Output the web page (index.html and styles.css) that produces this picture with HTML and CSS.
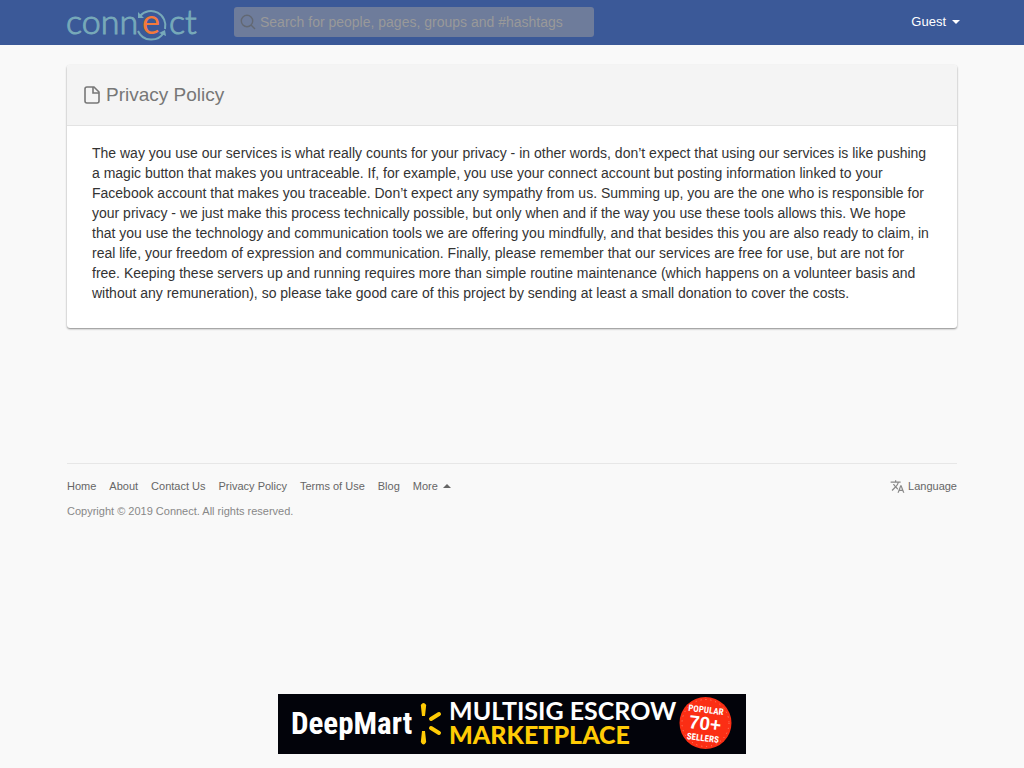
FILE: index.html
```html
<!DOCTYPE html>
<html lang="en">
<head>
<meta charset="utf-8">
<meta name="viewport" content="width=device-width, initial-scale=1">
<title>Privacy Policy - Connect</title>
<link rel="stylesheet" href="styles.css">
</head>
<body>
<header class="topbar">
  <div class="container topbar-inner">
    <a class="logo" href="#" aria-label="connect">
      <svg width="134" height="45" viewBox="0 0 134 45">
        <g class="logo-text">
          <text x="-1" y="34">conn</text>
          <text x="102" y="34">ct</text>
          <text class="logo-e" x="75" y="34">e</text>
        </g>
        <g class="logo-ring">
          <path d="M73 16A14.500 14.500 0 0 1 98 29"/>
          <path d="M71 31A14.500 14.500 0 0 0 97 32"/>
          <path class="logo-arrow" d="M71 12v6h6zM92 33l6-3 1 6z"/>
        </g>
      </svg>
    </a>
    <form class="search" role="search">
      <svg class="search-icon" width="16" height="16" viewBox="0 0 16 16"><circle cx="7" cy="7" r="5.7"/><path d="M11 11l4 4"/></svg>
      <input class="search-input" type="text" aria-label="Search" placeholder="Search for people, pages, groups and #hashtags">
    </form>
    <button class="guest" type="button">Guest <span class="caret"></span></button>
  </div>
</header>
<main class="container">
  <article class="card">
    <h1 class="card-title">
      <svg class="file-icon" width="16" height="18" viewBox="0 0 16 18"><path d="M3 1h7l5 5v9a2 2 0 0 1-2 2H3a2 2 0 0 1-2-2V3a2 2 0 0 1 2-2z"/><path d="M9 1v6h6"/></svg>
      Privacy Policy
    </h1>
    <p class="card-body">The way you use our services is what really counts for your privacy - in other words, don’t expect that using our services is like pushing a magic button that makes you untraceable. If, for example, you use your connect account but posting information linked to your Facebook account that makes you traceable. Don’t expect any sympathy from us. Summing up, you are the one who is responsible for your privacy - we just make this process technically possible, but only when and if the way you use these tools allows this. We hope that you use the technology and communication tools we are offering you mindfully, and that besides this you are also ready to claim, in real life, your freedom of expression and communication. Finally, please remember that our services are free for use, but are not for free. Keeping these servers up and running requires more than simple routine maintenance (which happens on a volunteer basis and without any remuneration), so please take good care of this project by sending at least a small donation to cover the costs.</p>
  </article>
</main>
<footer class="container">
  <div class="footer">
    <div class="footer-row">
      <nav class="footer-links">
        <a href="#">Home</a>
        <a href="#">About</a>
        <a href="#">Contact Us</a>
        <a href="#">Privacy Policy</a>
        <a href="#">Terms of Use</a>
        <a href="#">Blog</a>
        <button class="more" type="button">More <span class="caret caret-up"></span></button>
      </nav>
      <a class="language" href="#">
        <svg width="15" height="15" viewBox="0 0 24 24"><path d="M12.870 15.070l-2.540-2.510.030-.030A17.520 17.520 0 0 0 14.070 6H17V4h-7V2H8v2H1v2h11.170C11.500 7.920 10.440 9.750 9 11.350 8.070 10.320 7.300 9.190 6.690 8h-2c.730 1.630 1.730 3.170 2.980 4.560l-5.090 5.020L4 19l5-5 3.110 3.110.760-2.040zM18.500 10h-2L12 22h2l1.120-3h4.750L21 22h2l-4.500-12zm-2.620 7l1.620-4.330L19.120 17h-3.240z"/></svg>
        Language
      </a>
    </div>
    <p class="copyright">Copyright © 2019 Connect. All rights reserved.</p>
  </div>
</footer>
<a class="banner" href="#" aria-label="DeepMart multisig escrow marketplace">
  <svg width="468" height="60" viewBox="0 0 468 60">
    <rect width="468" height="60" fill="#02030a"/>
    <text class="deepmart" x="13" y="40">DeepMart</text>
    <path d="M142.800 11Q145.500 7 148.200 11L147 22h-3zM142.800 48Q145.500 53 148.200 48L147 37h-3z" fill="#ffcb05"/>
    <path d="M153 25l8-5M153 34l8 5" fill="none" stroke="#ffcb05" stroke-width="4" stroke-linecap="round"/>
    <text class="slogan" x="171" y="26" fill="#fff">MULTISIG ESCROW</text>
    <text class="slogan slogan-heavy" x="171" y="50" fill="#ffcb05">MARKETPLACE</text>
    <circle cx="427.500" cy="29" r="26" fill="#fb2e14"/>
    <circle cx="427.500" cy="29" r="23.500" fill="none" stroke="#ff8a70" stroke-width="1" stroke-dasharray="1 4"/>
    <g fill="#fff" text-anchor="middle">
      <text class="badge-small" x="428" y="19" transform="rotate(7 428 16)">POPULAR</text>
      <text class="badge-large" x="427" y="36" transform="rotate(7 427 30)">70+</text>
      <text class="badge-small" x="425" y="47" transform="rotate(7 425 43)">SELLERS</text>
    </g>
  </svg>
</a>
</body>
</html>
```
FILE: styles.css
```css
* { box-sizing: border-box; }
body {
  margin: 0;
  min-height: 100vh;
  display: flex;
  flex-direction: column;
  background: #f9f9f9;
  color: #333;
  font: 14px/20px "Liberation Sans", Arial, sans-serif;
}
a { color: inherit; text-decoration: none; }
button { padding: 0; border: 0; background: none; color: inherit; font: inherit; cursor: pointer; }
.container { width: 100%; max-width: 920px; margin: 0 auto; padding: 0 15px; }
.topbar { background: #3b5998; }
.topbar-inner { display: flex; align-items: center; height: 45px; }
.logo { display: flex; width: 167px; }
.logo svg { overflow: visible; }
.logo-text { font: 300 34px Lato, sans-serif; fill: #77a9b9; stroke: #77a9b9; stroke-width: 1; }
.logo-e { font-weight: 400; fill: #f4793b; stroke: #f4793b; stroke-width: 0; }
.logo-ring { fill: none; stroke: #77a9b9; stroke-width: 2; }
.logo-arrow { fill: #77a9b9; stroke: none; }
.search { display: flex; align-items: center; gap: 4px; width: 360px; height: 30px; margin-bottom: 1px; padding: 0 6px; border-radius: 3px; background: #6e7c9b; }
.search-icon { flex: none; fill: none; stroke: #626873; stroke-width: 1.4; }
.search-input { flex: 1; min-width: 0; padding: 0; border: 0; outline: 0; background: none; color: #fff; font: inherit; }
.search-input::placeholder { color: #999; opacity: 1; }
.guest { display: flex; align-items: center; gap: 6px; margin: 0 -3px 2px auto; color: #fff; font-size: 13px; }
.caret { border: 4px solid transparent; border-top-color: currentColor; border-bottom: 0; }
.caret-up { border-top: 0; border-bottom: 4px solid currentColor; }
.card { margin-top: 20px; border-radius: 3px; background: #fff; box-shadow: 0 1px 2px rgba(0, 0, 0, 0.45); overflow: hidden; }
.card-title { display: flex; align-items: center; gap: 6px; height: 61px; margin: 0; padding: 0 17px; border-bottom: 1px solid #e3e3e3; background: #f4f4f4; color: #777; font-size: 19px; font-weight: 400; }
.file-icon { fill: none; stroke: #777; stroke-width: 1.6; }
.card-body { margin: 0; padding: 17px 25px 25px; }
.footer { margin-top: 135px; padding-top: 12px; border-top: 1px solid #e7e7e7; color: #666; font-size: 11px; }
.footer-row { display: flex; justify-content: space-between; }
.footer-links { display: flex; gap: 13px; }
.more { display: flex; align-items: center; gap: 5px; }
.language { display: flex; align-items: center; gap: 3px; }
.language svg { fill: #888; }
.copyright { margin: 5px 0 0; color: #888; }
.banner { display: flex; margin: auto auto 14px; }
.banner svg { display: block; }
.deepmart { fill: #fff; font: 700 31px "Roboto Condensed", "Liberation Sans Narrow", Roboto, sans-serif; }
.slogan { font: 700 25px Lato, sans-serif; }
.slogan-heavy { font-weight: 900; }
.badge-small { font: 700 9px "Roboto Condensed", "Liberation Sans Narrow", Roboto, sans-serif; }
.badge-large { font: 700 19px "Liberation Sans", sans-serif; }
```
